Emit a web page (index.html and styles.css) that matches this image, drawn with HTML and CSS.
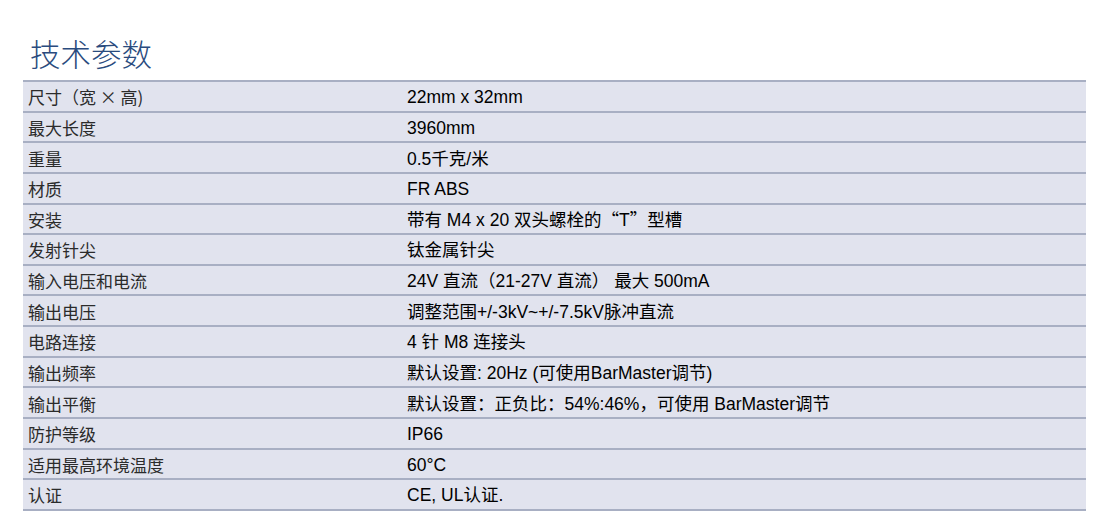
FILE: index.html
```html
<!DOCTYPE html>
<html lang="zh">
<head>
<meta charset="utf-8">
<link rel="stylesheet" href="styles.css">
</head>
<body>
<div class="page">
  <h1 class="title">技术参数</h1>
  <div class="spec">
    <div class="row"><div class="k">尺寸（宽 × 高)</div><div class="v">22mm x 32mm</div></div>
    <div class="row"><div class="k">最大长度</div><div class="v">3960mm</div></div>
    <div class="row"><div class="k">重量</div><div class="v">0.5千克/米</div></div>
    <div class="row"><div class="k">材质</div><div class="v">FR ABS</div></div>
    <div class="row"><div class="k">安装</div><div class="v">带有 M4 x 20 双头螺栓的<span class="cjk">“</span>T<span class="cjk">”</span>型槽</div></div>
    <div class="row"><div class="k">发射针尖</div><div class="v">钛金属针尖</div></div>
    <div class="row"><div class="k">输入电压和电流</div><div class="v">24V 直流（21-27V 直流） 最大 500mA</div></div>
    <div class="row"><div class="k">输出电压</div><div class="v">调整范围+/-3kV~+/-7.5kV脉冲直流</div></div>
    <div class="row"><div class="k">电路连接</div><div class="v">4 针 M8 连接头</div></div>
    <div class="row"><div class="k">输出频率</div><div class="v">默认设置: 20Hz (可使用BarMaster调节)</div></div>
    <div class="row"><div class="k">输出平衡</div><div class="v">默认设置：正负比：54%:46%，可使用 BarMaster调节</div></div>
    <div class="row"><div class="k">防护等级</div><div class="v">IP66</div></div>
    <div class="row"><div class="k">适用最高环境温度</div><div class="v">60°C</div></div>
    <div class="row"><div class="k">认证</div><div class="v">CE, UL认证.</div></div>
  </div>
</div>
</body>
</html>
```

FILE: styles.css
```css
html, body {
  margin: 0;
  padding: 0;
  background: #ffffff;
}
.page {
  padding: 33px 10px 0 23px;
  width: 1063px;
}
.title {
  margin: 0 0 7px 7px;
  font-family: "Noto Sans CJK SC", sans-serif;
  font-weight: 300;
  font-size: 30.5px;
  line-height: 40px;
  color: #2a4b7e;
}
.spec {
  border-top: 2px solid #a8afc3;
}
.row {
  display: grid;
  grid-template-columns: 377px 1fr;
  height: 28.64px;
  border-bottom: 2px solid #a8afc3;
  background: #e1e3ee;
  align-items: center;
}
.k, .v {
  line-height: 20px;
  white-space: nowrap;
  padding-top: 2px;
}
.k {
  padding-left: 5px;
  font-size: 17px;
  font-family: "Noto Sans CJK SC", sans-serif;
  color: #2b2b2b;
}
.v {
  padding-left: 7px;
  font-size: 17.5px;
  font-family: "Liberation Sans", "Noto Sans CJK SC", sans-serif;
  color: #000000;
}
.cjk {
  font-family: "Noto Sans CJK SC", sans-serif;
}
```
